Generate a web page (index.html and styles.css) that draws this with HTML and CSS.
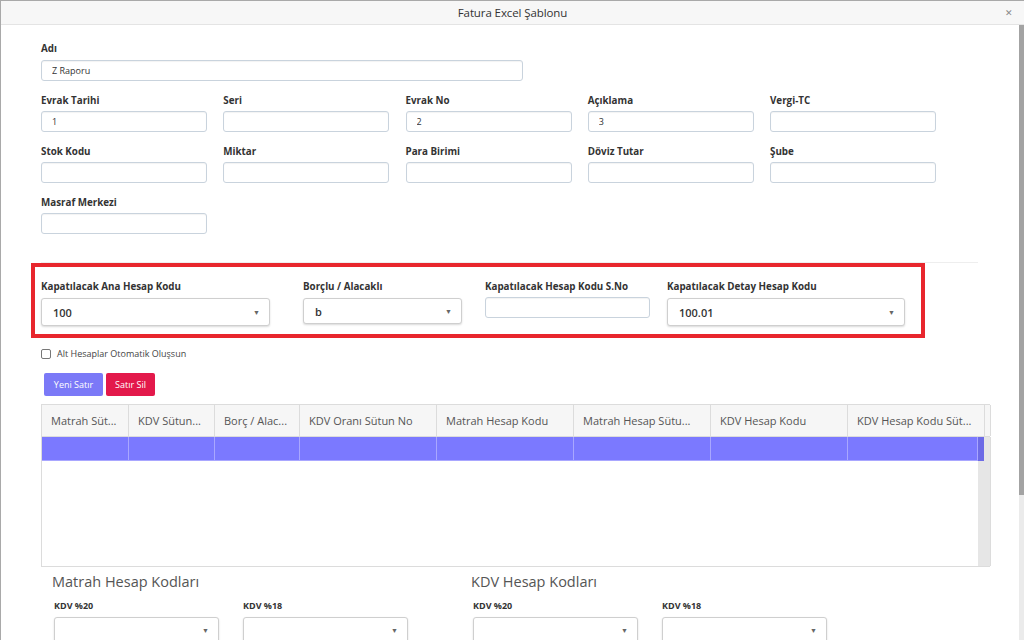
FILE: index.html
```html
<!DOCTYPE html>
<html lang="tr">
<head>
    <meta charset="UTF-8">
    <meta name="viewport" content="width=device-width, initial-scale=1.0">
    <title>Fatura Excel Şablonu</title>
    <link rel="stylesheet" href="styles.css">
</head>
<body>
    <div class="dialog">
        <!-- Başlık -->
        <div class="dialog-header">
            <span class="dialog-title">Fatura Excel Şablonu</span>
            <span class="dialog-close">&#x2715;</span>
        </div>

        <div class="dialog-main">
            <div class="dialog-body">
                <div class="field field-name">
                    <label>Adı</label>
                    <input class="text-input wide" type="text" value="Z Raporu">
                </div>

                <div class="form-grid">
                    <div class="field"><label>Evrak Tarihi</label><input class="text-input" type="text" value="1"></div>
                    <div class="field"><label>Seri</label><input class="text-input" type="text"></div>
                    <div class="field"><label>Evrak No</label><input class="text-input" type="text" value="2"></div>
                    <div class="field"><label>Açıklama</label><input class="text-input" type="text" value="3"></div>
                    <div class="field"><label>Vergi-TC</label><input class="text-input" type="text"></div>

                    <div class="field"><label>Stok Kodu</label><input class="text-input" type="text"></div>
                    <div class="field"><label>Miktar</label><input class="text-input" type="text"></div>
                    <div class="field"><label>Para Birimi</label><input class="text-input" type="text"></div>
                    <div class="field"><label>Döviz Tutar</label><input class="text-input" type="text"></div>
                    <div class="field"><label>Şube</label><input class="text-input" type="text"></div>

                    <div class="field"><label>Masraf Merkezi</label><input class="text-input" type="text"></div>
                </div>

                <hr class="divider">

                <!-- Kapatılacak hesaplar -->
                <div class="highlight-box">
                    <div class="field">
                        <label>Kapatılacak Ana Hesap Kodu</label>
                        <div class="select sel-main"><span>100</span><i class="caret">&#9660;</i></div>
                    </div>
                    <div class="field">
                        <label>Borçlu / Alacaklı</label>
                        <div class="select sel-side"><span>b</span><i class="caret">&#9660;</i></div>
                    </div>
                    <div class="field">
                        <label>Kapatılacak Hesap Kodu S.No</label>
                        <input class="text-input" type="text">
                    </div>
                    <div class="field">
                        <label>Kapatılacak Detay Hesap Kodu</label>
                        <div class="select sel-detail"><span>100.01</span><i class="caret">&#9660;</i></div>
                    </div>
                </div>

                <div class="check-row">
                    <span class="checkbox"></span>
                    <span>Alt Hesaplar Otomatik Oluşsun</span>
                </div>

                <div class="buttons">
                    <button class="btn btn-new">Yeni Satır</button>
                    <button class="btn btn-delete">Satır Sil</button>
                </div>

                <!-- Tablo -->
                <div class="grid">
                    <div class="grid-head">
                        <div class="cell c1">Matrah Süt...</div>
                        <div class="cell c2">KDV Sütun...</div>
                        <div class="cell c3">Borç / Alac...</div>
                        <div class="cell c4">KDV Oranı Sütun No</div>
                        <div class="cell c4">Matrah Hesap Kodu</div>
                        <div class="cell c4">Matrah Hesap Sütu...</div>
                        <div class="cell c4">KDV Hesap Kodu</div>
                        <div class="cell c4">KDV Hesap Kodu Süt...</div>
                        <div class="cell head-filler"></div>
                    </div>
                    <div class="grid-body">
                        <div class="grid-rows">
                            <div class="grid-row selected">
                                <div class="cell c1"></div>
                                <div class="cell c2"></div>
                                <div class="cell c3"></div>
                                <div class="cell c4"></div>
                                <div class="cell c4"></div>
                                <div class="cell c4"></div>
                                <div class="cell c4"></div>
                                <div class="cell c5"></div>
                            </div>
                        </div>
                        <div class="grid-scroll"><span class="row-tail"></span></div>
                    </div>
                </div>

                <!-- Hesap kodları -->
                <div class="codes">
                    <div class="code-group">
                        <h3>Matrah Hesap Kodları</h3>
                        <div class="code-fields">
                            <div class="field"><label>KDV %20</label><div class="select sel-code"><span></span><i class="caret">&#9660;</i></div></div>
                            <div class="field"><label>KDV %18</label><div class="select sel-code"><span></span><i class="caret">&#9660;</i></div></div>
                        </div>
                    </div>
                    <div class="code-group">
                        <h3>KDV Hesap Kodları</h3>
                        <div class="code-fields">
                            <div class="field"><label>KDV %20</label><div class="select sel-code"><span></span><i class="caret">&#9660;</i></div></div>
                            <div class="field"><label>KDV %18</label><div class="select sel-code"><span></span><i class="caret">&#9660;</i></div></div>
                        </div>
                    </div>
                </div>
            </div>

            <!-- Kaydırma çubuğu -->
            <div class="scrollbar"><div class="scroll-thumb"></div></div>
        </div>
    </div>
</body>
</html>
```

FILE: styles.css
```css
* {
    box-sizing: border-box;
    margin: 0;
    padding: 0;
}

body {
    font-family: 'Open Sans', 'Noto Sans', sans-serif;
    background: #fff;
    color: #333;
    width: 1024px;
    height: 640px;
    overflow: hidden;
}

.dialog {
    height: 640px;
    border-top: 1px solid #a9a9a9;
    border-left: 1px solid #a9a9a9;
    display: flex;
    flex-direction: column;
}

/* Başlık */
.dialog-header {
    height: 24px;
    flex: none;
    background: #f7f7f7;
    border-bottom: 1px solid #e4e4e4;
    display: flex;
    align-items: center;
    justify-content: center;
    position: relative;
}

.dialog-title {
    font-size: 11.5px;
    color: #333;
    letter-spacing: -0.1px;
}

.dialog-close {
    position: absolute;
    right: 11px;
    top: 5px;
    font-size: 9px;
    color: #888;
}

.dialog-main {
    flex: 1;
    display: flex;
    min-height: 0;
}

.dialog-body {
    flex: 1;
    padding: 17px 41px 0 40px;
    overflow: hidden;
}

/* Kaydırma çubuğu */
.scrollbar {
    width: 5px;
    flex: none;
    background: #ebebeb;
}

.scroll-thumb {
    height: 470px;
    background: #a3a3a3;
}

/* Form alanları */
.field label {
    display: block;
    font-size: 9.8px;
    font-weight: 700;
    color: #333;
    line-height: 13px;
    margin-bottom: 5px;
}

.form-grid .field label {
    margin-bottom: 4px;
}

.text-input {
    display: block;
    width: 166px;
    height: 21px;
    border: 1px solid #c9d3dd;
    border-radius: 3px;
    box-shadow: inset 0 1px 1px rgba(0, 0, 0, 0.05);
    font-family: inherit;
    font-size: 9px;
    color: #333;
    padding: 0 10px;
    outline: none;
}

.text-input.wide {
    width: 482px;
}

.field-name {
    margin-bottom: 13px;
}

.form-grid {
    display: grid;
    grid-template-columns: repeat(5, 166px);
    column-gap: 16.25px;
    row-gap: 13px;
}

.divider {
    border: none;
    border-top: 1px solid #eee;
    margin-top: 28px;
}

/* Kırmızı kutu */
.highlight-box {
    margin-left: -10px;
    width: 894px;
    border: 4px solid #e8262d;
    padding: 13px 0 8px 6px;
    display: grid;
    grid-template-columns: 262px 182px 182px 240px;
}

.highlight-box .text-input {
    width: 165px;
    margin-top: -1px;
}

.select {
    height: 28px;
    border: 1px solid #cfcfcf;
    border-radius: 3px;
    box-shadow: 0 1px 2px rgba(0, 0, 0, 0.15);
    background: #fff;
    display: flex;
    align-items: center;
    justify-content: space-between;
    padding: 0 9px 0 11px;
    font-size: 11px;
    font-weight: 600;
    color: #333;
}

.caret {
    font-style: normal;
    font-size: 7px;
    color: #666;
}

.sel-main { width: 229px; }
.sel-side { width: 159px; height: 26px; }
.sel-detail { width: 238px; }
.sel-code { width: 165px; height: 26px; }

/* Onay kutusu */
.check-row {
    display: flex;
    align-items: center;
    gap: 6px;
    margin-top: 9px;
    font-size: 9px;
    color: #444;
}

.checkbox {
    width: 10px;
    height: 10px;
    border: 1px solid #777;
    border-radius: 2px;
    background: #fff;
}

/* Butonlar */
.buttons {
    display: flex;
    gap: 3px;
    margin: 13px 0 0 3px;
}

.btn {
    height: 23px;
    border: none;
    border-radius: 2px;
    font-family: inherit;
    font-size: 9px;
    color: #fff;
    padding: 0 7px;
}

.btn-new {
    background: #7b79f7;
    width: 59px;
}

.btn-delete {
    background: #e3194b;
    width: 49px;
}

/* Tablo */
.grid {
    margin-top: 8px;
    width: 949px;
    border: 1px solid #dcdcdc;
    border-right: none;
    height: 163px;
    display: flex;
    flex-direction: column;
}

.grid-head {
    display: flex;
    height: 32px;
    background: #f6f6f6;
    border-bottom: 1px solid #dcdcdc;
}

.cell {
    flex: none;
    border-right: 1px solid #dcdcdc;
    font-size: 11px;
    color: #555;
    padding: 0 9px;
    line-height: 31px;
    white-space: nowrap;
    overflow: hidden;
}

.c1 { width: 87px; }
.c2 { width: 86px; }
.c3 { width: 85px; }
.c4 { width: 137px; }
.c5 { width: 130px; }

.head-filler {
    width: 6px;
    padding: 0;
}

.grid-body {
    flex: 1;
    display: flex;
}

.grid-rows {
    flex: 1;
}

.grid-row {
    display: flex;
    height: 24px;
}

.grid-row.selected {
    background: #7b79ff;
}

.grid-row .cell {
    border-right-color: #a9a7ff;
    border-bottom: 1px solid #a9a7ff;
}

.grid-scroll {
    width: 13px;
    flex: none;
    background: #e6e6e6;
    border-right: 1px solid #dcdcdc;
}

.row-tail {
    display: block;
    width: 6px;
    height: 24px;
    background: #6d6be6;
}

/* Hesap kodları */
.codes {
    display: grid;
    grid-template-columns: 419px 419px;
    padding-left: 11px;
    margin-top: 5px;
}

.code-group h3 {
    font-size: 14.5px;
    font-weight: 400;
    color: #555;
    line-height: 20px;
    margin-bottom: 7px;
}

.code-fields {
    display: flex;
    gap: 24px;
    padding-left: 2px;
}

.code-fields .field label {
    font-size: 9px;
    margin-bottom: 5px;
}
```
